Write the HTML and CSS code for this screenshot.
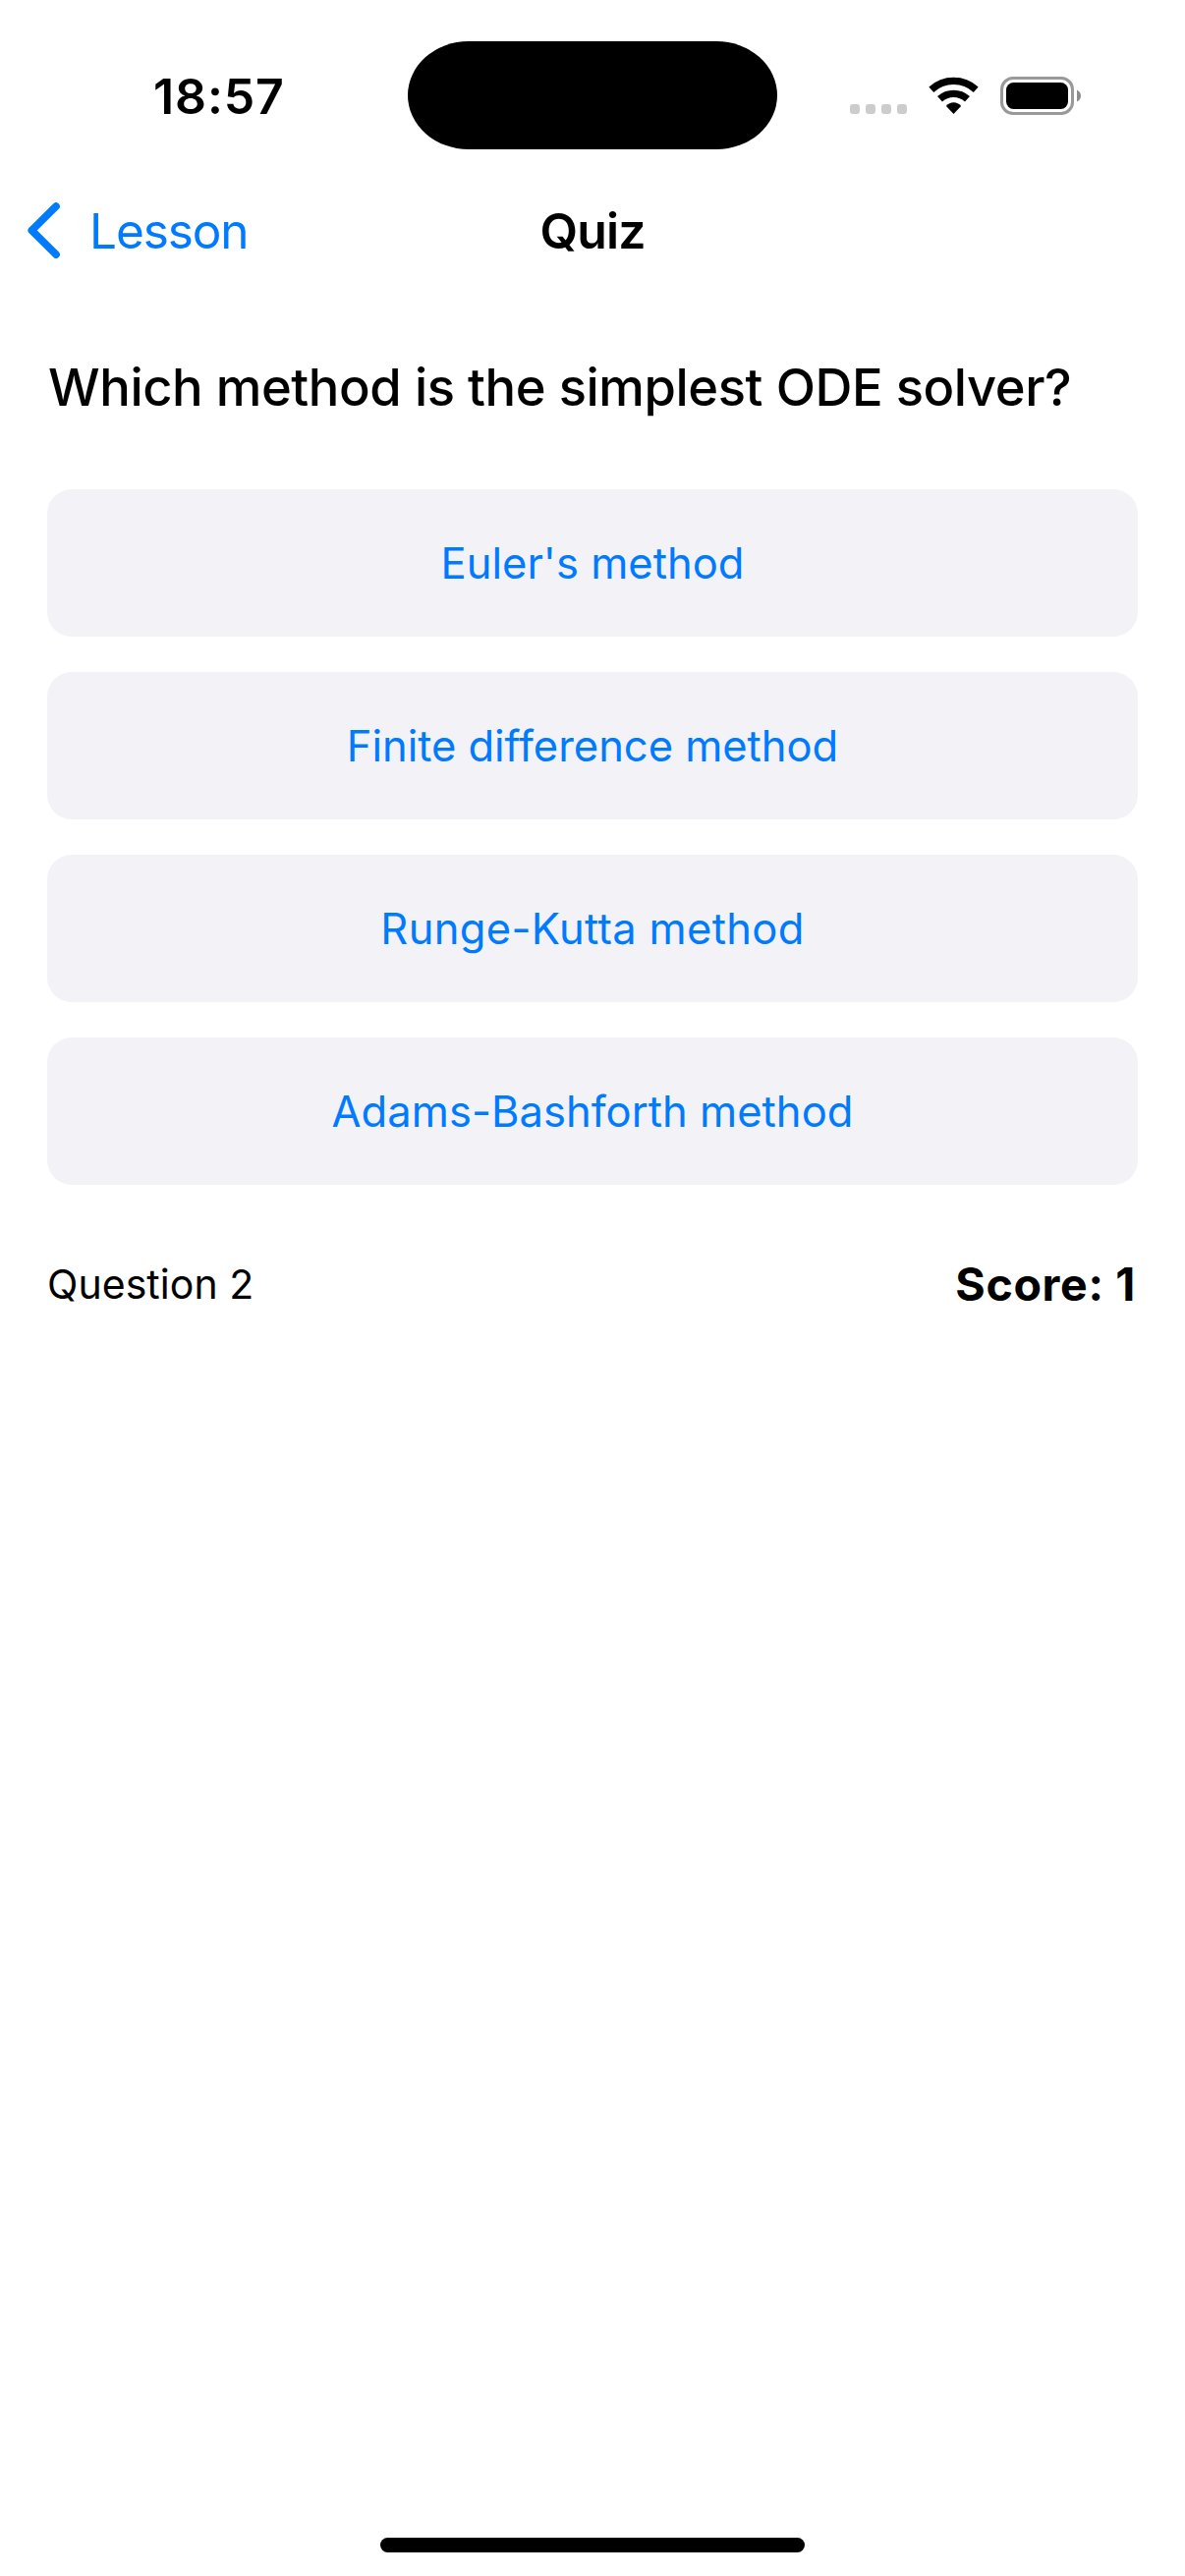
FILE: index.html
```
<!DOCTYPE html>
<html lang="en">
<head>
<meta charset="utf-8">
<title>Quiz</title>
<link rel="stylesheet" href="styles.css">
</head>
<body>
<div class="screen">
  <header class="status-bar">
    <span class="time">18:57</span>
    <div class="island"></div>
    <div class="status-icons">
      <svg class="signal" width="58" height="10" viewBox="0 0 58 10" fill="#ccc">
        <rect width="10" height="10" rx="3.2"/>
        <rect x="16" width="10" height="10" rx="3.2"/>
        <rect x="32" width="10" height="10" rx="3.2"/>
        <rect x="48" width="10" height="10" rx="3.2"/>
      </svg>
      <svg class="wifi" width="51" height="38" viewBox="0 0 51 38">
        <g fill="none" stroke="#000" stroke-width="7.3">
          <path d="M2.8 13.2A33.65 33.65 0 0 1 48.2 13.2"/>
          <path d="M11.5 22.8A20.65 20.65 0 0 1 39.5 22.8"/>
        </g>
        <path d="M25.5 38L17.9 29.9Q21 26.3 25.5 26.3T33.1 29.9Z"/>
      </svg>
      <svg class="battery" width="82" height="39" viewBox="0 0 82 39">
        <rect x="1.5" y="1.5" width="72" height="36" rx="11.5" fill="none" stroke="#999" stroke-width="3"/>
        <rect x="6" y="6" width="63" height="27" rx="7.5"/>
        <path d="M78 13.5Q82 15.5 82 19.5T78 25.5Z" fill="#8c8c8c"/>
      </svg>
    </div>
  </header>
  <nav class="nav-bar">
    <a class="back">
      <svg width="33" height="57" viewBox="0 0 33 57" fill="none" stroke="#007aff" stroke-width="7.6" stroke-linecap="round" stroke-linejoin="round">
        <path d="M29 4L4.3 28.5L29 53"/>
      </svg>
      <span class="back-label">Lesson</span>
    </a>
    <h1 class="title">Quiz</h1>
  </nav>
  <main class="content">
    <h2 class="question">Which method is the simplest ODE solver?</h2>
    <div class="options">
      <button class="option">Euler's method</button>
      <button class="option option-tight">Finite difference method</button>
      <button class="option option-loose">Runge-Kutta method</button>
      <button class="option">Adams-Bashforth method</button>
    </div>
    <div class="summary">
      <span class="progress">Question 2</span>
      <span class="score">Score: 1</span>
    </div>
  </main>
  <div class="home-indicator"></div>
</div>
</body>
</html>
```
FILE: styles.css
```
* {
  box-sizing: border-box;
}

body {
  margin: 0;
  background: #fff;
  color: #000;
  font-family: Inter, "Liberation Sans", sans-serif;
}

.screen {
  display: flex;
  flex-direction: column;
  width: 1206px;
  height: 2622px;
}

.status-bar {
  display: grid;
  grid-template-columns: 415px 376px 1fr;
  align-items: center;
  height: 196px;
}

.time {
  padding-left: 156px;
  font-size: 50px;
  font-weight: 600;
  letter-spacing: 0.87px;
  line-height: 60px;
}

.island {
  height: 110px;
  margin-bottom: 2px;
  border-radius: 62px / 55px;
  background: #000;
}

.status-icons {
  display: flex;
  align-items: flex-end;
  height: 39px;
  margin-bottom: 1px;
  padding-left: 74px;
}

.signal {
  margin-bottom: 1px;
}

.wifi {
  margin: 0 22px 1px;
}

.nav-bar {
  display: grid;
  grid-template-columns: 1fr auto 1fr;
  align-items: center;
  height: 78px;
}

.back {
  display: flex;
  align-items: center;
  gap: 30px;
  padding-left: 28px;
  color: #007aff;
}

.back svg {
  margin-bottom: 1px;
}

.back-label {
  font-size: 49.5px;
  letter-spacing: -1.1px;
  line-height: 60px;
}

.title {
  margin: 0;
  font-size: 50px;
  font-weight: 600;
  letter-spacing: -0.88px;
  line-height: 60px;
}

.content {
  flex: 1;
  padding: 88px 48px 0;
}

.question {
  margin: 0 0 72px;
  padding-left: 1px;
  font-size: 52.5px;
  font-weight: 500;
  letter-spacing: -0.43px;
  line-height: 64px;
  white-space: nowrap;
}

.options {
  display: flex;
  flex-direction: column;
  gap: 36px;
}

.option {
  height: 150px;
  padding: 0;
  border: 0;
  border-radius: 25px;
  background: #f2f2f7;
  color: #007aff;
  font-family: inherit;
  font-size: 43.5px;
  letter-spacing: 0.04px;
}

.option-tight {
  letter-spacing: -0.02px;
}

.option-loose {
  letter-spacing: 0.33px;
}

.summary {
  display: flex;
  align-items: center;
  justify-content: space-between;
  height: 58px;
  margin-top: 72px;
}

.progress {
  font-size: 41px;
  letter-spacing: 0.05px;
}

.score {
  padding-right: 2px;
  font-size: 46.5px;
  font-weight: 700;
  letter-spacing: 0.66px;
}

.home-indicator {
  width: 432px;
  height: 15px;
  margin: 0 auto 24px;
  border-radius: 8px;
  background: #000;
}
```
